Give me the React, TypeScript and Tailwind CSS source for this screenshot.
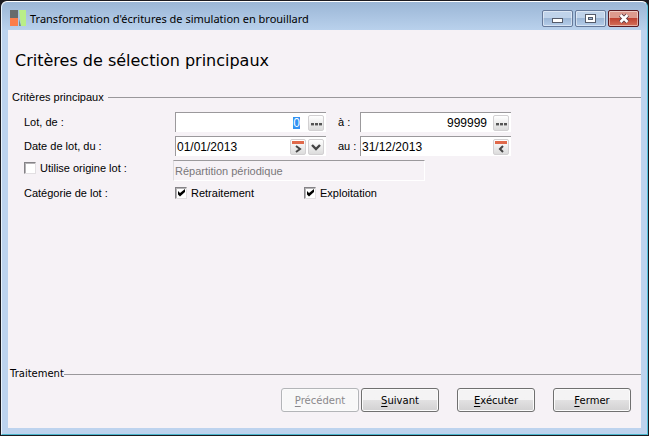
import { useState } from "react";
import type { ReactNode } from "react";

function AppLogo() {
  return (
    <svg className="h-4 w-4 shrink-0" viewBox="0 0 16 16" aria-hidden="true">
      <rect x="0" y="0" width="8" height="8" fill="#666b6c" />
      <rect x="0" y="8" width="8" height="8" fill="#fb7d4a" />
      <path d="M9 0h7v16h-5z" fill="#b9ee88" />
      <path d="M9 9l2 7h-2z" fill="#6f8a8c" />
    </svg>
  );
}

function DotsIcon() {
  return (
    <svg className="h-4 w-4 shrink-0" viewBox="0 0 16 16" aria-hidden="true">
      <path d="M3 8h3v2H3zM7 8h3v2H7zM11 8h3v2h-3z" fill="#555" />
      <path d="M3 10h3v1H3zM7 10h3v1H7zM11 10h3v1h-3z" fill="#aaa" />
    </svg>
  );
}

function CalendarIcon({ back = false }: { back?: boolean }) {
  return (
    <svg className="h-4 w-4 shrink-0" viewBox="0 0 16 16" aria-hidden="true">
      <rect x="2" y="2" width="12" height="3" fill="#e0694a" />
      <path
        d={back ? "M10 7L7 10l3 3" : "M6 7l4 3-4 3"}
        fill="none"
        stroke="#444"
        strokeWidth="2"
      />
    </svg>
  );
}

function ChevronIcon() {
  return (
    <svg className="h-4 w-4 shrink-0" viewBox="0 0 16 16" aria-hidden="true">
      <path d="M4 6l4 4 4-4" fill="none" stroke="#444" strokeWidth="2.4" />
    </svg>
  );
}

function FieldButton({ label, children }: { label: string; children: ReactNode }) {
  return (
    <button
      type="button"
      aria-label={label}
      className="flex h-4 w-4 shrink-0 items-center justify-center rounded-xs border border-[#d2d0d2] bg-linear-to-b from-white to-[#dcdcdc]"
    >
      {children}
    </button>
  );
}

interface FieldProps {
  id: string;
  value: string;
  onChange: (value: string) => void;
  alignRight?: boolean;
  children: ReactNode;
}

function Field({ id, value, onChange, alignRight, children }: FieldProps) {
  return (
    <div className="flex h-5 items-center gap-0.5 border-t border-l border-[#9b999c] bg-white pr-0.5">
      <input
        id={id}
        value={value}
        onChange={(e) => onChange(e.target.value)}
        className={`min-w-0 flex-1 bg-transparent text-[12px] outline-none ${
          alignRight ? "pr-1 text-right" : "pl-px"
        }`}
      />
      {children}
    </div>
  );
}

interface CheckProps {
  label: string;
  checked: boolean;
  onChange: (checked: boolean) => void;
}

function Check({ label, checked, onChange }: CheckProps) {
  return (
    <label className="flex items-center gap-1">
      <span className="grid h-3 w-3 shrink-0">
        <input
          type="checkbox"
          checked={checked}
          onChange={(e) => onChange(e.target.checked)}
          className="col-start-1 row-start-1 h-3 w-3 appearance-none border border-t-[#858387] border-r-[#e2dfe2] border-b-[#e2dfe2] border-l-[#858387] bg-white shadow-[inset_1px_1px_0_#b5b3b6]"
        />
        {checked && (
          <svg
            className="pointer-events-none col-start-1 row-start-1 h-3 w-3"
            viewBox="0 0 12 12"
            aria-hidden="true"
          >
            <path d="M3 4l2 2 5-4v3L5 9.500 3 7.500z" fill="#000" />
          </svg>
        )}
      </span>
      {label}
    </label>
  );
}

function SectionTitle({ children, gap }: { children: ReactNode; gap?: boolean }) {
  return (
    <div className={`flex items-center ${gap ? "gap-1" : ""}`}>
      <h2>{children}</h2>
      <div className="h-px flex-1 bg-[#9a989b]" />
    </div>
  );
}

function ActionButton({ label, disabled }: { label: string; disabled?: boolean }) {
  return (
    <button
      type="button"
      disabled={disabled}
      className="h-6 w-[78px] rounded-[3px] border border-[#707070] bg-linear-to-b from-[#f4f3f4] from-50% via-[#e2e1e2] via-50% to-[#d2d1d2] pt-0.5 shadow-[inset_0_0_0_1px_#fbfbfb] disabled:border-[#b3b5b8] disabled:from-[#f8f8f8] disabled:via-[#f8f8f8] disabled:to-[#f8f8f8] disabled:text-[#8a888b]"
    >
      <span className="underline underline-offset-2">{label[0]}</span>
      {label.slice(1)}
    </button>
  );
}

const windowButton =
  "flex h-[17px] w-[31px] items-center justify-center rounded-xs border shadow-[inset_0_0_0_1px_#ffffff77]";

export default function App() {
  const [lotFrom, setLotFrom] = useState("0");
  const [lotTo, setLotTo] = useState("999999");
  const [dateFrom, setDateFrom] = useState("01/01/2013");
  const [dateTo, setDateTo] = useState("31/12/2013");
  const [useOrigin, setUseOrigin] = useState(false);
  const [retraitement, setRetraitement] = useState(true);
  const [exploitation, setExploitation] = useState(true);

  return (
    <div className="flex min-h-screen bg-[#1b1a20] p-px font-['Liberation_Sans',sans-serif] text-[11px] leading-4 text-black">
      <div className="flex flex-1 flex-col rounded-t-md border border-t-white border-r-[#56c3dd] border-b-[#4bb5cb] border-l-[#e8f2fb] bg-[#bdd3ee] px-1.5 pb-1.5">
        <header className="-mx-1.5 flex h-7 items-center gap-1 rounded-t-md bg-linear-to-b from-[#9bb6d6] to-[#b9d1ec] pt-1 pr-2 pl-2">
          <AppLogo />
          <h1 className="flex-1 pt-0.5 font-['Noto_Sans',sans-serif] text-[11px]">
            Transformation d'écritures de simulation en brouillard
          </h1>
          <div className="flex gap-0.5">
            <button
              type="button"
              aria-label="Réduire"
              className={`${windowButton} border-[#66799a] bg-linear-to-b from-[#c0d3ea] from-50% via-[#9db7d6] via-50% to-[#b5cdea]`}
            >
              <svg className="h-3 w-3" viewBox="0 0 12 12" aria-hidden="true">
                <rect x="0.500" y="6.500" width="10" height="4" fill="#fff" stroke="#555b6a" />
              </svg>
            </button>
            <button
              type="button"
              aria-label="Agrandir"
              className={`${windowButton} border-[#66799a] bg-linear-to-b from-[#c0d3ea] from-50% via-[#9db7d6] via-50% to-[#b5cdea]`}
            >
              <svg className="h-3 w-3" viewBox="0 0 12 12" aria-hidden="true">
                <rect x="0.500" y="2.500" width="10" height="8" fill="#fff" stroke="#555b6a" />
                <rect x="3.500" y="5.500" width="4" height="2" fill="#9db7d6" stroke="#555b6a" />
              </svg>
            </button>
            <button
              type="button"
              aria-label="Fermer la fenêtre"
              className={`${windowButton} border-[#5a1a22] bg-linear-to-b from-[#dd9a8e] from-50% via-[#bf4232] via-50% to-[#d4705a]`}
            >
              <svg className="h-3 w-3" viewBox="0 0 12 12" aria-hidden="true">
                <path d="M2.500 3l7 7M9.500 3l-7 7" stroke="#5b3b44" strokeWidth="4.400" />
                <path d="M2.500 3l7 7M9.500 3l-7 7" stroke="#fff" strokeWidth="2.600" />
              </svg>
            </button>
          </div>
        </header>

        <main className="flex flex-1 flex-col bg-[#f6f2f6]">
          <p className="px-[7px] pt-[19px] pb-4 font-['DejaVu_Sans',sans-serif] text-[16px] leading-6">
            Critères de sélection principaux
          </p>

          <section className="pl-1">
            <SectionTitle gap>Critères principaux</SectionTitle>
            <div className="mt-[7px] grid grid-cols-[151px_151px_34px_151px] items-center gap-y-1 pl-3">
              <label htmlFor="lot-from">Lot, de :</label>
              <div className="flex h-5 items-center gap-0.5 border-t border-l border-[#9b999c] bg-white pr-0.5">
                <div className="flex flex-1 justify-end pr-1.5">
                  <input
                    id="lot-from"
                    value={lotFrom}
                    onChange={(e) => setLotFrom(e.target.value)}
                    className="h-3 w-[7px] bg-[#3392f3] text-right text-[12px] text-white outline-none"
                  />
                </div>
                <FieldButton label="Choisir le lot de début">
                  <DotsIcon />
                </FieldButton>
              </div>
              <label htmlFor="lot-to" className="pl-3">
                à :
              </label>
              <Field id="lot-to" value={lotTo} onChange={setLotTo} alignRight>
                <FieldButton label="Choisir le lot de fin">
                  <DotsIcon />
                </FieldButton>
              </Field>

              <label htmlFor="date-from">Date de lot, du :</label>
              <Field id="date-from" value={dateFrom} onChange={setDateFrom}>
                <FieldButton label="Calendrier de début">
                  <CalendarIcon />
                </FieldButton>
                <FieldButton label="Périodes">
                  <ChevronIcon />
                </FieldButton>
              </Field>
              <label htmlFor="date-to" className="pl-3">
                au :
              </label>
              <Field id="date-to" value={dateTo} onChange={setDateTo}>
                <FieldButton label="Calendrier de fin">
                  <CalendarIcon back />
                </FieldButton>
              </Field>
            </div>

            <div className="mt-1 grid grid-cols-[149px_252px] items-start pl-3">
              <Check label="Utilise origine lot :" checked={useOrigin} onChange={setUseOrigin} />
              <input
                aria-label="Origine du lot"
                value="Répartition périodique"
                disabled
                readOnly
                className="h-[21px] border border-t-[#9b999c] border-r-white border-b-white border-l-[#dedbde] pl-px text-[#79777a]"
              />
            </div>

            <div className="mt-1 grid grid-cols-[151px_129px_129px] items-center pl-3">
              <span>Catégorie de lot :</span>
              <Check label="Retraitement" checked={retraitement} onChange={setRetraitement} />
              <Check label="Exploitation" checked={exploitation} onChange={setExploitation} />
            </div>
          </section>

          <footer className="mt-auto pb-4 pl-0.5 font-['DejaVu_Sans',sans-serif] text-[10px]">
            <SectionTitle>Traitement</SectionTitle>
            <div className="mt-1.5 flex justify-end pr-2.5">
              <div className="flex gap-0.5">
                <ActionButton label="Précédent" disabled />
                <ActionButton label="Suivant" />
              </div>
              <div className="ml-[18px] flex gap-[18px]">
                <ActionButton label="Exécuter" />
                <ActionButton label="Fermer" />
              </div>
            </div>
          </footer>
        </main>
      </div>
    </div>
  );
}
